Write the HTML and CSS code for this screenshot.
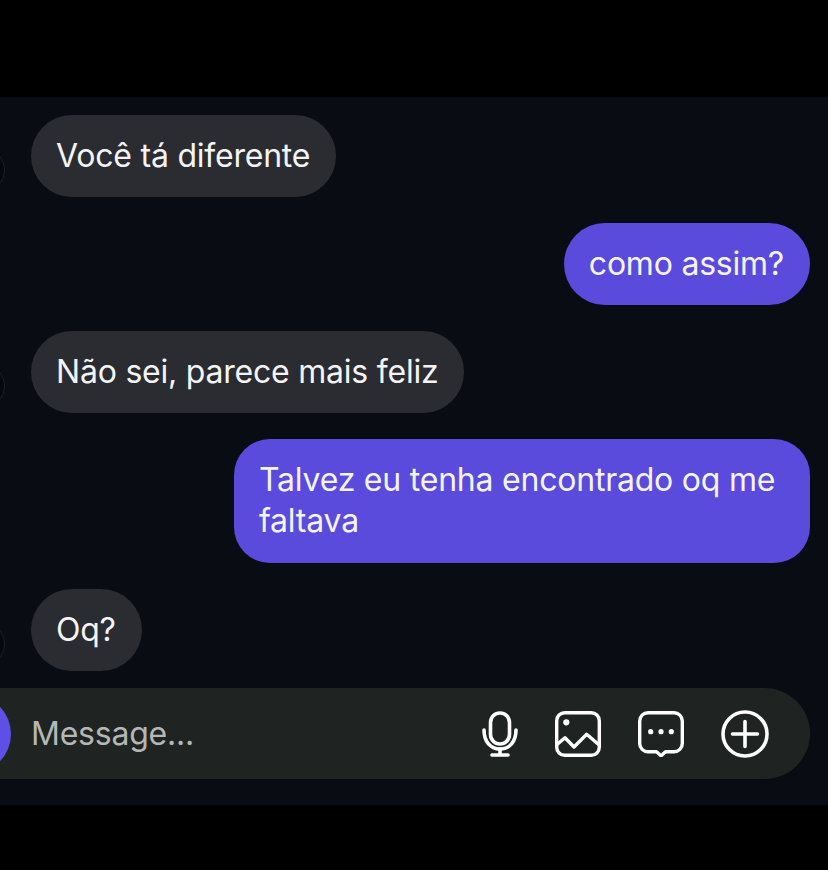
FILE: index.html
```html
<!DOCTYPE html>
<html lang="pt">
<head>
<meta charset="utf-8">
<title>Chat</title>
<link rel="stylesheet" href="styles.css">
</head>
<body>
<main class="chat">
  <section class="thread">
    <div class="row in"><span class="avatar"></span><p class="bubble">Você tá diferente</p></div>
    <div class="row out"><p class="bubble">como assim?</p></div>
    <div class="row in"><span class="avatar"></span><p class="bubble">Não sei, parece mais feliz</p></div>
    <div class="row out"><p class="bubble wide">Talvez eu tenha encontrado oq me faltava</p></div>
    <div class="row in"><span class="avatar"></span><p class="bubble">Oq?</p></div>
  </section>
  <footer class="composer">
    <span class="camera"></span>
    <span class="placeholder">Message...</span>
    <div class="tools">
      <svg class="icon mic" viewBox="0 0 36 46" fill="none" stroke="#fff" stroke-width="3.600" stroke-linecap="round" stroke-linejoin="round">
        <rect x="8.500" y="2" width="19" height="31" rx="9.500"/>
        <path d="M2 19c0 11 6 19 16 19s16-8 16-19"/>
        <path d="M18 38v6M10 44h16"/>
      </svg>
      <svg class="icon" viewBox="0 0 46 46" fill="none" stroke="#fff" stroke-width="3.400" stroke-linecap="round" stroke-linejoin="round">
        <rect x="1.700" y="1.700" width="42.600" height="42.600" rx="8"/>
        <circle cx="11.300" cy="11.300" r="3.100" fill="#fff" stroke="none"/>
        <path d="M2.300 33.300L10 26.700 19 36 31.700 23.300 43.300 33.300"/>
      </svg>
      <svg class="icon" viewBox="0 0 46 46" fill="none" stroke="#fff" stroke-width="3.400" stroke-linecap="round" stroke-linejoin="round">
        <path d="M10 1.700h26a8.300 8.300 0 0 1 8.300 8.300v22.500a8.300 8.300 0 0 1-8.300 8.300h-8.500L23 44.800l-4.500-4H10a8.300 8.300 0 0 1-8.300-8.300V10A8.300 8.300 0 0 1 10 1.700z"/>
        <circle cx="12.700" cy="20.700" r="2.600" fill="#fff" stroke="none"/>
        <circle cx="23" cy="20.700" r="2.600" fill="#fff" stroke="none"/>
        <circle cx="33.300" cy="20.700" r="2.600" fill="#fff" stroke="none"/>
      </svg>
      <svg class="icon plus" viewBox="0 0 48 48" fill="none" stroke="#fff" stroke-width="3.600" stroke-linecap="round">
        <circle cx="24" cy="24" r="22"/>
        <path d="M24 11.500v25M11.500 24h25"/>
      </svg>
    </div>
  </footer>
</main>
</body>
</html>
```
FILE: styles.css
```css
* { box-sizing: border-box; }

html, body {
  margin: 0;
  height: 100%;
  background: #000;
  overflow: hidden;
}

body {
  padding-top: 97px;
  font-family: Inter, "Liberation Sans", sans-serif;
  color: #fff;
}

.chat {
  height: 708px;
  background: #0a0c14;
  padding: 18px 18px 0 0;
  display: flex;
  flex-direction: column;
}

.thread {
  display: flex;
  flex-direction: column;
  gap: 26px;
}

.row {
  display: flex;
  align-items: flex-end;
}

.row.out { justify-content: flex-end; }

.avatar {
  width: 44px;
  height: 44px;
  margin-left: -39px;
  margin-right: 26px;
  margin-bottom: 5px;
  flex: none;
  border-radius: 50%;
  background: #07080e;
  border: 1px solid #1d1f27;
}

.bubble {
  margin: 0;
  padding: 20px 26px 21px 25px;
  font-size: 32px;
  line-height: 41px;
  letter-spacing: -0.22px;
  font-weight: 400;
  color: #f4f4f6;
  border-radius: 41px;
}

.in .bubble { background: #2a2c32; }

.out .bubble { background: #5b4bdc; }

.bubble.wide {
  width: 576px;
  padding-bottom: 22px;
  border-radius: 36px;
}

.composer {
  margin-top: 17px;
  height: 91px;
  background: #1f2322;
  border-radius: 0 46px 46px 0;
  display: flex;
  align-items: center;
  padding-right: 41px;
}

.camera {
  width: 78px;
  height: 78px;
  margin-left: -67px;
  margin-right: 20px;
  flex: none;
  border-radius: 50%;
  background: #5e4fe6;
}

.placeholder {
  font-size: 32px;
  letter-spacing: -0.22px;
  color: #b5b7b6;
}

.tools {
  margin-left: auto;
  display: flex;
  align-items: center;
  gap: 37px;
}

.icon {
  width: 46px;
  height: 46px;
  display: block;
}

.icon.mic { width: 36px; }

.icon.plus {
  width: 48px;
  height: 48px;
}
```
